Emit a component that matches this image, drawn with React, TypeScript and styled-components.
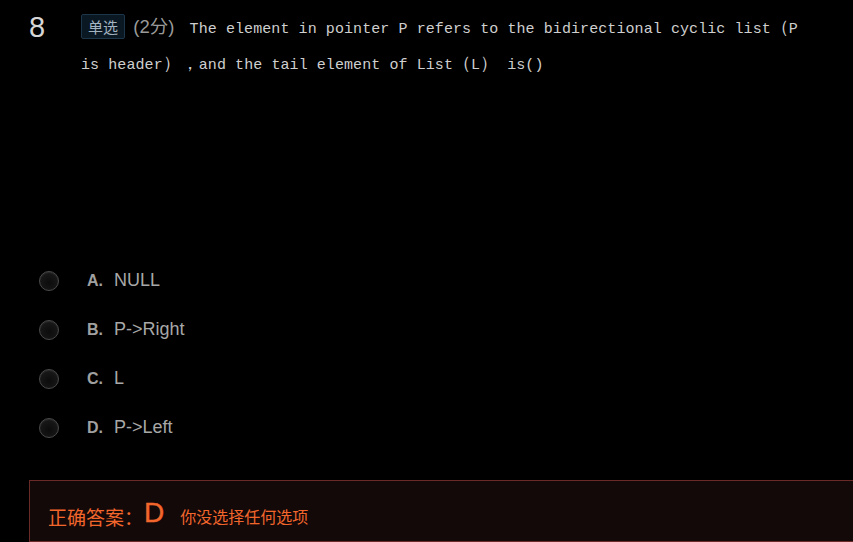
import React from "react";
import styled, { createGlobalStyle } from "styled-components";

const Global = createGlobalStyle`
  html, body { margin: 0; padding: 0; background: #000; }
  body { width: 853px; height: 542px; overflow: hidden; }
`;

const Page = styled.div`
  width: 853px;
  height: 542px;
  background: #000;
  display: flex;
  flex-direction: column;
  overflow: hidden;
`;

const Header = styled.div`
  display: flex;
  flex: none;
  padding: 10px 0 0 29px;
  height: 256px;
  box-sizing: border-box;
`;

const Number = styled.div`
  width: 52px;
  flex: none;
  font-family: "Liberation Sans", Arial, sans-serif;
  font-size: 29px;
  color: #d6d6d6;
  line-height: 34px;
`;

const Question = styled.div`
  width: 738px;
  font-family: "Liberation Mono", monospace;
  font-size: 15px;
  letter-spacing: 0.08px;
  line-height: 36px;
  color: #cfcfcf;
  margin-top: 2px;
`;

const Wide = styled.span`
  font-size: 18px;
  line-height: 1;
  letter-spacing: 0;
`;

const Tag = styled.span`
  display: inline-block;
  font-family: "Noto Sans CJK SC", sans-serif;
  font-size: 15px;
  line-height: 23px;
  padding: 0 6px;
  background: #0a1823;
  border: 1px solid #1c3548;
  border-radius: 2px;
  color: #a3b3c0;
  vertical-align: 0px;
`;

const Score = styled.span`
  font-family: "Liberation Sans", "Noto Sans CJK SC", sans-serif;
  font-size: 18.5px;
  line-height: 1;
  color: #9a9a9a;
  margin: 0 15px 0 8px;
`;

const Options = styled.div`
  display: flex;
  flex: none;
  flex-direction: column;
  padding-left: 39px;
`;

const OptionRow = styled.div`
  display: flex;
  align-items: center;
  height: 49px;
`;

const Radio = styled.span`
  width: 18px;
  height: 18px;
  border-radius: 50%;
  border: 1px solid #4a4a4a;
  background: radial-gradient(circle at 50% 60%, #0c0c0c 0%, #181818 70%, #262626 100%);
  box-shadow: inset 0 1px 1px rgba(255,255,255,0.08);
  flex: none;
`;

const Letter = styled.span`
  margin-left: 28px;
  width: 27px;
  font-family: "Liberation Sans", Arial, sans-serif;
  font-weight: bold;
  font-size: 16px;
  color: #a0a0a0;
`;

const OptionText = styled.span`
  font-family: "Liberation Sans", Arial, sans-serif;
  font-size: 18px;
  color: #a8a8a8;
`;

const AnswerBox = styled.div`
  margin: 28px 0 0 29px;
  height: 50px;
  width: 840px;
  flex: none;
  background: #130909;
  border: 1px solid #6a2a28;
  display: flex;
  align-items: center;
  padding-left: 18px;
  padding-top: 10px;
  box-sizing: content-box;
  color: #f2662c;
  font-family: "Noto Sans CJK SC", sans-serif;
`;

const AnswerLabel = styled.span`
  font-size: 19px;
`;

const AnswerLetter = styled.span`
  font-family: "Liberation Sans", Arial, sans-serif;
  font-size: 28px;
  -webkit-text-stroke: 0.4px #f2662c;
  margin: 0 16px 0 1px;
  position: relative;
  top: -3px;
`;

const AnswerNote = styled.span`
  font-size: 16px;
`;

const options = [
  { k: "A.", t: "NULL" },
  { k: "B.", t: "P->Right" },
  { k: "C.", t: "L" },
  { k: "D.", t: "P->Left" },
];

export default function App() {
  return (
    <Page>
      <Global />
      <Header>
        <Number>8</Number>
        <Question>
          <Tag>单选</Tag>
          <Score>(2分)</Score>
          The element in pointer P refers to the bidirectional cyclic list
          <Wide>（</Wide>P is header<Wide>），</Wide>and the tail element of List<Wide>（</Wide>L<Wide>）</Wide> is()
        </Question>
      </Header>
      <Options>
        {options.map((o) => (
          <OptionRow key={o.k}>
            <Radio />
            <Letter>{o.k}</Letter>
            <OptionText>{o.t}</OptionText>
          </OptionRow>
        ))}
      </Options>
      <AnswerBox>
        <AnswerLabel>正确答案：</AnswerLabel>
        <AnswerLetter>D</AnswerLetter>
        <AnswerNote>你没选择任何选项</AnswerNote>
      </AnswerBox>
    </Page>
  );
}
